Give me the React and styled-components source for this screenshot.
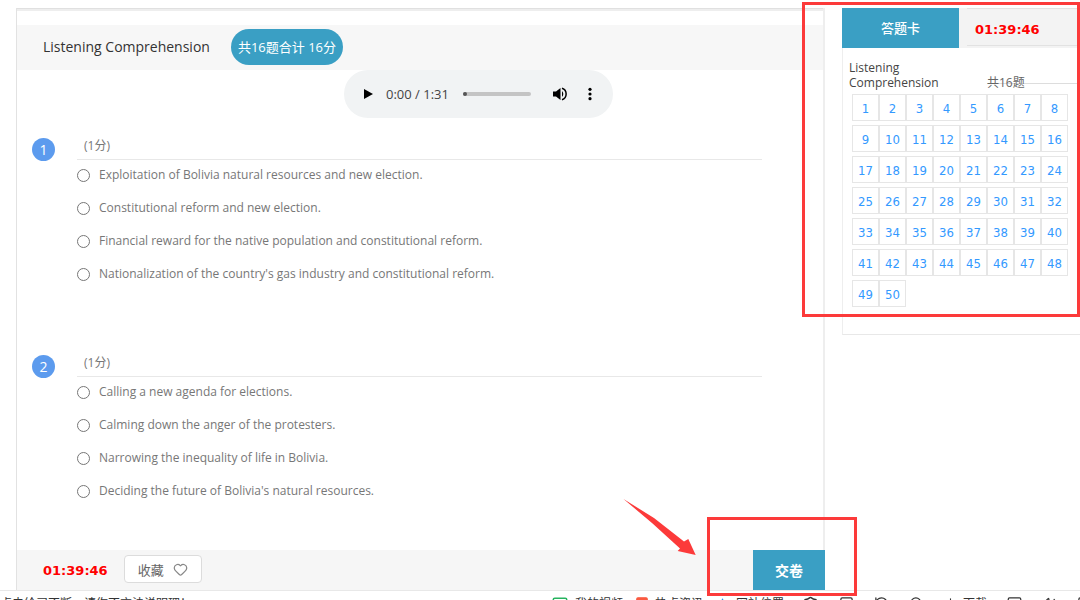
import React, { useState } from "react";
import styled, { createGlobalStyle } from "styled-components";
import {
  ArrowDown,
  Heart,
  MessageSquare,
  RotateCcw,
  Search,
  Shield,
  Square,
  Volume2,
} from "lucide-react";

const GlobalStyles = createGlobalStyle`
  * {
    box-sizing: border-box;
  }
  html, body {
    margin: 0;
    overflow: hidden;
    background: #fff;
  }
  body, button, input {
    font-family: "Open Sans", "Noto Sans CJK SC", sans-serif;
    font-size: 12px;
  }
  button {
    padding: 0;
    border: 0;
    background: none;
    cursor: pointer;
  }
`;

const Workspace = styled.div`
  display: flex;
  align-items: flex-start;
  gap: 17px;
  padding: 8px 0 0 16px;
`;
const Paper = styled.main`
  flex: 1;
  min-width: 0;
  border-left: 1px solid #e2e2e2;
  border-right: 2px solid #eeeeee;
`;
const PaperEdge = styled.div`
  height: 3px;
  border-top: 1px solid #e0e0e0;
  background: #eee;
`;
const PaperHeader = styled.header`
  display: flex;
  align-items: center;
  gap: 21px;
  height: 45px;
  margin-top: 14px;
  padding: 0 0 2px 26px;
  background: #f7f7f7;
`;
const PaperTitle = styled.h1`
  margin: 0;
  font-size: 14px;
  font-weight: 400;
  line-height: 20px;
  color: #333;
`;
const ScorePill = styled.span`
  padding: 0 7px;
  border-radius: 18px;
  background: #3a9fc4;
  color: #fff;
  font-size: 13px;
  line-height: 36px;
`;

const Player = styled.div`
  display: flex;
  align-items: center;
  width: 269px;
  height: 48px;
  margin: 0 0 18px 327px;
  padding: 0 15px 0 19px;
  border-radius: 24px;
  background: #f1f3f4;
`;
const PlayerButton = styled.button`
  display: flex;
  margin-left: ${(p) => p.$space || 0}px;
`;
const PlayerTime = styled.span`
  margin-left: 11px;
  color: #444;
  font-size: 13px;
`;
const Seek = styled.input`
  appearance: none;
  flex: 1;
  min-width: 0;
  height: 4px;
  margin: 0 0 0 14px;
  border-radius: 2px;
  background: #c4c4c4;
  &::-webkit-slider-thumb {
    appearance: none;
    width: 4px;
    height: 4px;
    border-radius: 2px;
    background: #555;
  }
`;

const Questions = styled.div`
  display: flex;
  flex-direction: column;
  gap: 71px;
  padding: 0 61px 51px 15px;
`;
const QuestionRow = styled.section`
  display: flex;
  align-items: flex-start;
  gap: 22px;
`;
const QuestionNumber = styled.span`
  width: 23px;
  margin-top: 2px;
  border-radius: 50%;
  background: #5c9bee;
  color: #fff;
  font-size: 14px;
  line-height: 23px;
  text-align: center;
`;
const QuestionBody = styled.fieldset`
  flex: 1;
  min-width: 0;
  margin: 0;
  padding: 0;
  border: 0;
`;
const QuestionScore = styled.legend`
  width: 100%;
  height: 24px;
  padding: 0 7px;
  border-bottom: 1px solid #e8e8e8;
  color: #777;
  font-size: 12px;
  line-height: 20px;
`;
const Options = styled.div`
  display: flex;
  flex-direction: column;
  align-items: flex-start;
  gap: 16px;
  padding-top: 6px;
`;
const Option = styled.label`
  display: flex;
  align-items: center;
  gap: 9px;
  height: 17px;
  color: #777;
  line-height: 17px;
  input {
    width: 13px;
    height: 13px;
    margin: 2px 0 0;
  }
`;

const Timer = styled.span`
  color: #f00;
  font-family: "DejaVu Sans", sans-serif;
  font-size: 13px;
  font-weight: 700;
`;
const PaperFooter = styled.footer`
  position: relative;
  display: flex;
  align-items: center;
  height: 40px;
  margin-right: -2px;
  padding-left: 26px;
  background: #f6f6f6;
`;
const FavoriteButton = styled.button`
  display: flex;
  align-items: center;
  justify-content: center;
  gap: 9px;
  width: 78px;
  height: 28px;
  margin: 0 auto 2px 16px;
  border: 1px solid #dcdcdc;
  border-radius: 4px;
  background: #fff;
  color: #666;
  font-size: 13px;
`;
const SubmitButton = styled.button`
  width: 72px;
  height: 40px;
  background: #3a9fc4;
  color: #fff;
  font-size: 14px;
  font-weight: 700;
`;

const AnswerCard = styled.aside`
  position: relative;
  width: 238px;
  border-left: 1px solid #eee;
  border-bottom: 1px solid #e8e8e8;
`;
const CardTop = styled.div`
  display: flex;
  height: 40px;
  margin-left: -1px;
  background: #f3f3f3;
`;
const CardTab = styled.h2`
  width: 117px;
  margin: 0;
  background: #3a9fc4;
  color: #fff;
  font-size: 13px;
  font-weight: 500;
  line-height: 40px;
  text-align: center;
`;
const CardTime = styled.div`
  flex: 1;
  height: 38px;
  margin-left: 8px;
  padding-left: 8px;
  border-top: 1px solid #e2e2e2;
  border-bottom: 1px solid #e2e2e2;
  line-height: 42px;
`;
const CardSection = styled.div`
  display: flex;
  align-items: flex-end;
  padding: 12px 3px 4px 6px;
  color: #444;
  line-height: 15px;
`;
const SectionName = styled.div`
  width: 100px;
  margin-right: 38px;
`;
const SectionCount = styled.div`
  flex: 1;
  background: linear-gradient(#ddd, #ddd) 0 8px / 100% 1px no-repeat;
  color: #666;
`;
const NumberGrid = styled.div`
  display: grid;
  grid-template-columns: repeat(8, 27px);
  row-gap: 4px;
  padding: 0 0 27px 9px;
`;
const NumberButton = styled.button`
  height: 27px;
  padding-top: 3px;
  border: 1px solid #e6e6e6;
  color: #3399ff;
  font-family: "DejaVu Sans Condensed", "DejaVu Sans", sans-serif;
  font-size: 13px;
  line-height: 22px;
`;

const CardMark = styled.div`
  position: absolute;
  top: -6px;
  right: 0;
  bottom: 17px;
  left: -41px;
  border: 3px solid #fc3a3a;
  pointer-events: none;
`;
const SubmitMark = styled.div`
  position: absolute;
  top: -33px;
  right: -32px;
  width: 150px;
  height: 79px;
  border: 3px solid #fc3a3a;
  pointer-events: none;
`;
const ArrowMark = styled.svg`
  position: absolute;
  top: -52px;
  right: 129px;
  pointer-events: none;
`;

const StatusBar = styled.div`
  display: flex;
  align-items: flex-start;
  justify-content: space-between;
  height: 28px;
  padding-top: 5px;
  border-top: 1px solid #e8e8e8;
  color: #333;
  line-height: 16px;
  white-space: nowrap;
`;
const StatusTools = styled.div`
  display: flex;
  gap: 12px;
  margin-right: -12px;
`;
const StatusItem = styled.span`
  display: flex;
  gap: 6px;
`;
const StatusIcons = styled.div`
  display: flex;
  gap: 20px;
  margin-left: 6px;
`;

const questions = [
  {
    id: 1,
    options: [
      "Exploitation of Bolivia natural resources and new election.",
      "Constitutional reform and new election.",
      "Financial reward for the native population and constitutional reform.",
      "Nationalization of the country's gas industry and constitutional reform.",
    ],
  },
  {
    id: 2,
    options: [
      "Calling a new agenda for elections.",
      "Calming down the anger of the protesters.",
      "Narrowing the inequality of life in Bolivia.",
      "Deciding the future of Bolivia's natural resources.",
    ],
  },
];
const numbers = Array.from({ length: 50 }, (_, i) => i + 1);

function AudioPlayer() {
  const [position, setPosition] = useState(0);
  return (
    <Player>
      <PlayerButton aria-label="play">
        <svg width="12" height="12" viewBox="0 0 12 12">
          <path d="M1 1 L10 6 L1 11 Z" />
        </svg>
      </PlayerButton>
      <PlayerTime>0:00 / 1:31</PlayerTime>
      <Seek
        type="range"
        aria-label="seek"
        min="0"
        max="91"
        value={position}
        onChange={(e) => setPosition(e.target.value)}
      />
      <PlayerButton aria-label="mute" $space={21}>
        <svg width="16" height="16" viewBox="0 0 16 16">
          <path d="M1 5.5 H4 L8.5 2 V14 L4 10.5 H1 Z" />
          <path d="M10 5 Q12.6 8 10 11 Z" />
          <path d="M10 2.3 A6 6 0 0 1 10 13.7" fill="none" stroke="#000" strokeWidth="1.5" />
        </svg>
      </PlayerButton>
      <PlayerButton aria-label="more" $space={14}>
        <svg width="16" height="16" viewBox="0 0 16 16">
          <circle cx="8" cy="3.3" r="1.6" />
          <circle cx="8" cy="8" r="1.6" />
          <circle cx="8" cy="12.7" r="1.6" />
        </svg>
      </PlayerButton>
    </Player>
  );
}

function Question({ id, options, answer, onAnswer }) {
  return (
    <QuestionRow>
      <QuestionNumber>{id}</QuestionNumber>
      <QuestionBody>
        <QuestionScore>(1分)</QuestionScore>
        <Options>
          {options.map((text, i) => (
            <Option key={text}>
              <input
                type="radio"
                name={`question-${id}`}
                checked={answer === i}
                onChange={() => onAnswer(id, i)}
              />
              {text}
            </Option>
          ))}
        </Options>
      </QuestionBody>
    </QuestionRow>
  );
}

export default function App() {
  const [answers, setAnswers] = useState({});

  const handleAnswer = (id, index) => {
    setAnswers({ ...answers, [id]: index });
  };

  return (
    <>
      <GlobalStyles />
      <Workspace>
        <Paper>
          <PaperEdge />
          <PaperHeader>
            <PaperTitle>Listening Comprehension</PaperTitle>
            <ScorePill>共16题合计 16分</ScorePill>
          </PaperHeader>
          <AudioPlayer />
          <Questions>
            {questions.map((q) => (
              <Question key={q.id} {...q} answer={answers[q.id]} onAnswer={handleAnswer} />
            ))}
          </Questions>
          <PaperFooter>
            <Timer>01:39:46</Timer>
            <FavoriteButton>
              收藏
              <Heart size={15} strokeWidth={2} color="#888" />
            </FavoriteButton>
            <SubmitButton>交卷</SubmitButton>
            <SubmitMark />
            <ArrowMark width="74" height="58" viewBox="0 0 74 58">
              <path
                d="M1.5 1 L32 20 L62 43.5 L66.3 41 L73.7 57 L55.7 53 L58 50.5 L30 25 Z"
                fill="#fc3a3a"
              />
            </ArrowMark>
          </PaperFooter>
        </Paper>
        <AnswerCard>
          <CardTop>
            <CardTab>答题卡</CardTab>
            <CardTime>
              <Timer>01:39:46</Timer>
            </CardTime>
          </CardTop>
          <CardSection>
            <SectionName>Listening Comprehension</SectionName>
            <SectionCount>共16题</SectionCount>
          </CardSection>
          <NumberGrid>
            {numbers.map((n) => (
              <NumberButton key={n}>{n}</NumberButton>
            ))}
          </NumberGrid>
          <CardMark />
        </AnswerCard>
      </Workspace>
      <StatusBar>
        <span>点击给习不断，请你不方法说明理！</span>
        <StatusTools>
          <StatusItem>
            <Square size={18} color="#27b35f" />
            我的视频
          </StatusItem>
          <StatusItem>
            <Square size={14} color="#fa5a41" fill="#fa5a41" />
            热点资讯
          </StatusItem>
          <StatusItem>
            <ArrowDown size={15} color="#2f8ff0" />
            网站位置
          </StatusItem>
          <StatusIcons>
            <Shield size={17} />
            <Square size={15} />
            <RotateCcw size={15} />
            <Search size={15} />
            <StatusItem>
              <ArrowDown size={13} />
              下载
            </StatusItem>
            <MessageSquare size={15} />
            <Volume2 size={15} />
            <Square size={15} />
          </StatusIcons>
        </StatusTools>
      </StatusBar>
    </>
  );
}
